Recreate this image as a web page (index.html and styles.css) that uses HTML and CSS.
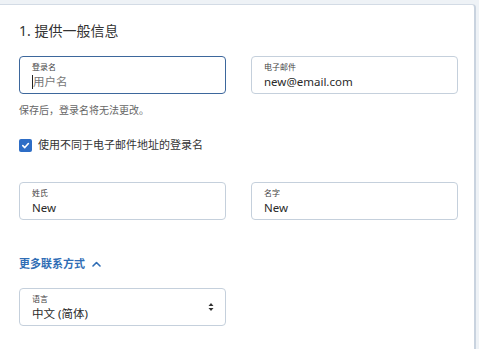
FILE: index.html
```html
<!DOCTYPE html>
<html lang="zh-CN">
<head>
<meta charset="utf-8">
<link rel="stylesheet" href="styles.css">
</head>
<body>
<div class="card">
  <h2 class="title">1. 提供一般信息</h2>
  <div class="row row-first">
    <div class="field focused">
      <div class="label">登录名</div>
      <div class="value placeholder"><span class="caret"></span>用户名</div>
    </div>
    <div class="field">
      <div class="label">电子邮件</div>
      <div class="value">new@email.com</div>
    </div>
  </div>
  <p class="help">保存后，登录名将无法更改。</p>
  <label class="check">
    <span class="box"><svg width="9" height="9" viewBox="0 0 10 10"><path d="M2 5.2 L4.2 7.3 L8.2 2.8" fill="none" stroke="#fff" stroke-width="1.8" stroke-linecap="round" stroke-linejoin="round"/></svg></span>
    <span>使用不同于电子邮件地址的登录名</span>
  </label>
  <div class="row row-names">
    <div class="field">
      <div class="label">姓氏</div>
      <div class="value">New</div>
    </div>
    <div class="field">
      <div class="label">名字</div>
      <div class="value">New</div>
    </div>
  </div>
  <div class="more">更多联系方式 <svg width="9" height="6" viewBox="0 0 9 6"><path d="M1 5 L4.5 1.5 L8 5" fill="none" stroke="#2f6db5" stroke-width="1.6" stroke-linecap="round" stroke-linejoin="round"/></svg></div>
  <div class="row row-lang">
    <div class="field select">
      <div class="label">语言</div>
      <div class="value">中文 (简体)</div>
      <svg class="arrows" width="6" height="10" viewBox="0 0 6 10"><path d="M0.5 4 L3 1 L5.5 4 Z M0.5 6 L3 9 L5.5 6 Z" fill="#333"/></svg>
    </div>
  </div>
</div>
</body>
</html>
```
FILE: styles.css
```css
html, body {
  margin: 0;
  padding: 0;
}
body {
  background: #eef2f6;
  font-family: "Noto Sans", "Noto Sans CJK SC", sans-serif;
  color: #333;
  padding-top: 4px;
  height: 345px;
  overflow: hidden;
}
.card {
  margin-left: -10px;
  width: 486px;
  background: #fff;
  border: 1px solid #d3dbe5;
  border-right: 2px solid #c9d3df;
  border-radius: 4px;
  padding: 16px 0 40px 28px;
  box-sizing: border-box;
  height: 360px;
}
.title {
  margin: 0;
  font-size: 14px;
  font-weight: normal;
  line-height: 20px;
  color: #333;
}
.row {
  display: grid;
  grid-template-columns: 207px 207px;
  column-gap: 25px;
}
.row-first { margin-top: 15px; }
.row-names { margin-top: 30px; }
.row-lang { margin-top: 16px; }
.field {
  position: relative;
  height: 38px;
  box-sizing: border-box;
  border: 1px solid #c5d0dc;
  border-radius: 4px;
  padding: 5px 12px 0 12px;
}
.field.focused {
  border-color: #3d679c;
}
.label {
  font-size: 8px;
  line-height: 10px;
  color: #444;
}
.value {
  font-size: 11.5px;
  line-height: 16px;
  margin-top: 2px;
  color: #2a2a2a;
  display: flex;
  align-items: center;
}
.value.placeholder {
  color: #777;
}
.caret {
  display: inline-block;
  width: 1px;
  height: 14px;
  background: #222;
}
.help {
  margin: 9px 0 0;
  font-size: 10px;
  line-height: 14px;
  color: #666;
}
.check {
  margin-top: 21px;
  display: flex;
  align-items: center;
  gap: 6px;
  font-size: 11px;
  line-height: 14px;
  color: #333;
}
.box {
  width: 13px;
  height: 13px;
  border-radius: 2px;
  background: #2d6dc6;
  display: flex;
  align-items: center;
  justify-content: center;
}
.more {
  margin-top: 36px;
  font-size: 11px;
  line-height: 16px;
  font-weight: bold;
  color: #2f6db5;
  display: flex;
  align-items: center;
  gap: 7px;
}
.select .arrows {
  position: absolute;
  right: 11px;
  top: 13px;
}
```
